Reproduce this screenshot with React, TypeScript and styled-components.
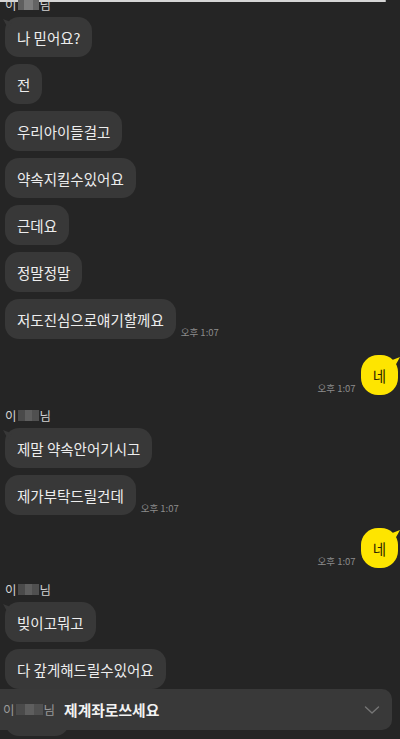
import { createGlobalStyle, styled } from "styled-components";

const GlobalStyle = createGlobalStyle`
  html, body {
    margin: 0;
    padding: 0;
    background: #252525;
  }
  body {
    font-family: "Noto Sans CJK KR", "Noto Sans", sans-serif;
  }
`;

const Screen = styled.div`
  position: relative;
  width: 400px;
  height: 739px;
  overflow: hidden;
  background: #252525;
`;

const TopEdge = styled.div`
  width: 386px;
  height: 2px;
  background: #d6d6d6;
  border-radius: 0 3px 3px 0;
`;

const Feed = styled.div`
  display: flex;
  flex-direction: column;
  margin-top: -5px;
  padding: 0 2px 0 5px;
`;

const Group = styled.div<{ $top?: number; $mine?: boolean }>`
  display: flex;
  flex-direction: column;
  align-items: ${(p) => (p.$mine ? "flex-end" : "flex-start")};
  gap: 7px;
  margin-top: ${(p) => p.$top ?? 0}px;
`;

const Name = styled.div`
  display: flex;
  align-items: center;
  height: 14px;
  margin-bottom: -1px;
  font-size: 12.5px;
  color: #d2d2d2;
`;

const Mosaic = styled.span<{ $w: number; $light?: boolean }>`
  display: inline-block;
  width: ${(p) => p.$w}px;
  height: 11px;
  margin: 0 1px;
  background: ${(p) =>
    p.$light
      ? "linear-gradient(90deg, #5e5e5e 0 30%, #7c7c7c 30% 70%, #646464 70%)"
      : "linear-gradient(90deg, #4a4a4a 0 35%, #5e5e5e 35% 65%, #505050 65%)"};
`;

const Row = styled.div<{ $mine?: boolean }>`
  display: flex;
  align-items: flex-end;
  justify-content: ${(p) => (p.$mine ? "flex-end" : "flex-start")};
  gap: 5px;
`;

const Bubble = styled.div<{ $mine?: boolean; $tail?: boolean }>`
  position: relative;
  display: flex;
  align-items: center;
  height: 40px;
  padding: 0 ${(p) => (p.$mine ? 12 : 12)}px;
  box-sizing: border-box;
  border-radius: ${(p) => (p.$mine ? 17 : 14)}px;
  background: ${(p) => (p.$mine ? "#fee500" : "#383838")};
  color: ${(p) => (p.$mine ? "#2a2300" : "#ededed")};
  font-size: 14.5px;
  white-space: nowrap;

  &::before {
    content: "";
    display: ${(p) => (p.$tail ? "block" : "none")};
    position: absolute;
    top: 2px;
    ${(p) => (p.$mine ? "right: -2px;" : "left: -2px;")}
    width: 9px;
    height: 9px;
    background: inherit;
    clip-path: ${(p) =>
      p.$mine
        ? "polygon(100% 0, 0 40%, 45% 100%)"
        : "polygon(0 0, 100% 40%, 55% 100%)"};
  }
`;

const Time = styled.span`
  margin-bottom: 2px;
  font-size: 9.5px;
  line-height: 10px;
  color: #8c8c8c;
  white-space: nowrap;
`;

const Notice = styled.div`
  position: absolute;
  left: 0;
  top: 689px;
  width: 392px;
  height: 41px;
  display: flex;
  align-items: center;
  padding: 0 12px 0 3px;
  box-sizing: border-box;
  background: #393939;
  border-radius: 0 10px 10px 0;
`;

const NoticeName = styled.span`
  display: flex;
  align-items: center;
  font-size: 12.5px;
  color: #9a9a9a;
`;

const NoticeText = styled.span`
  margin-left: 9px;
  font-size: 14.8px;
  font-weight: 700;
  color: #f2f2f2;
  flex: 1;
`;

const Chevron = () => (
  <svg width="16" height="10" viewBox="0 0 16 10" fill="none">
    <path d="M1.5 2 L8 8 L14.5 2" stroke="#767676" strokeWidth="1.4" strokeLinecap="round" strokeLinejoin="round" />
  </svg>
);

const Sender = ({ light }: { light?: boolean }) => (
  <Name>
    이<Mosaic $w={21} $light={light} />님
  </Name>
);

const time = "오후 1:07";

export default function App() {
  return (
    <Screen>
      <GlobalStyle />
      <TopEdge />
      <Feed>
        <Group>
          <Sender light />
          <Bubble $tail>나 믿어요?</Bubble>
          <Bubble>전</Bubble>
          <Bubble>우리아이들걸고</Bubble>
          <Bubble>약속지킬수있어요</Bubble>
          <Bubble>근데요</Bubble>
          <Bubble>정말정말</Bubble>
          <Row>
            <Bubble>저도진심으로얘기할께요</Bubble>
            <Time>{time}</Time>
          </Row>
        </Group>

        <Group $mine $top={16}>
          <Row $mine>
            <Time>{time}</Time>
            <Bubble $mine $tail>네</Bubble>
          </Row>
        </Group>

        <Group $top={13}>
          <Sender />
          <Bubble $tail>제말 약속안어기시고</Bubble>
          <Row>
            <Bubble>제가부탁드릴건데</Bubble>
            <Time>{time}</Time>
          </Row>
        </Group>

        <Group $mine $top={13}>
          <Row $mine>
            <Time>{time}</Time>
            <Bubble $mine $tail>네</Bubble>
          </Row>
        </Group>

        <Group $top={14}>
          <Sender />
          <Bubble $tail>빚이고뭐고</Bubble>
          <Bubble>다 갚게해드릴수있어요</Bubble>
          <Bubble>제계좌</Bubble>
        </Group>
      </Feed>

      <Notice>
        <NoticeName>
          이<Mosaic $w={27} />님
        </NoticeName>
        <NoticeText>제계좌로쓰세요</NoticeText>
        <Chevron />
      </Notice>
    </Screen>
  );
}
